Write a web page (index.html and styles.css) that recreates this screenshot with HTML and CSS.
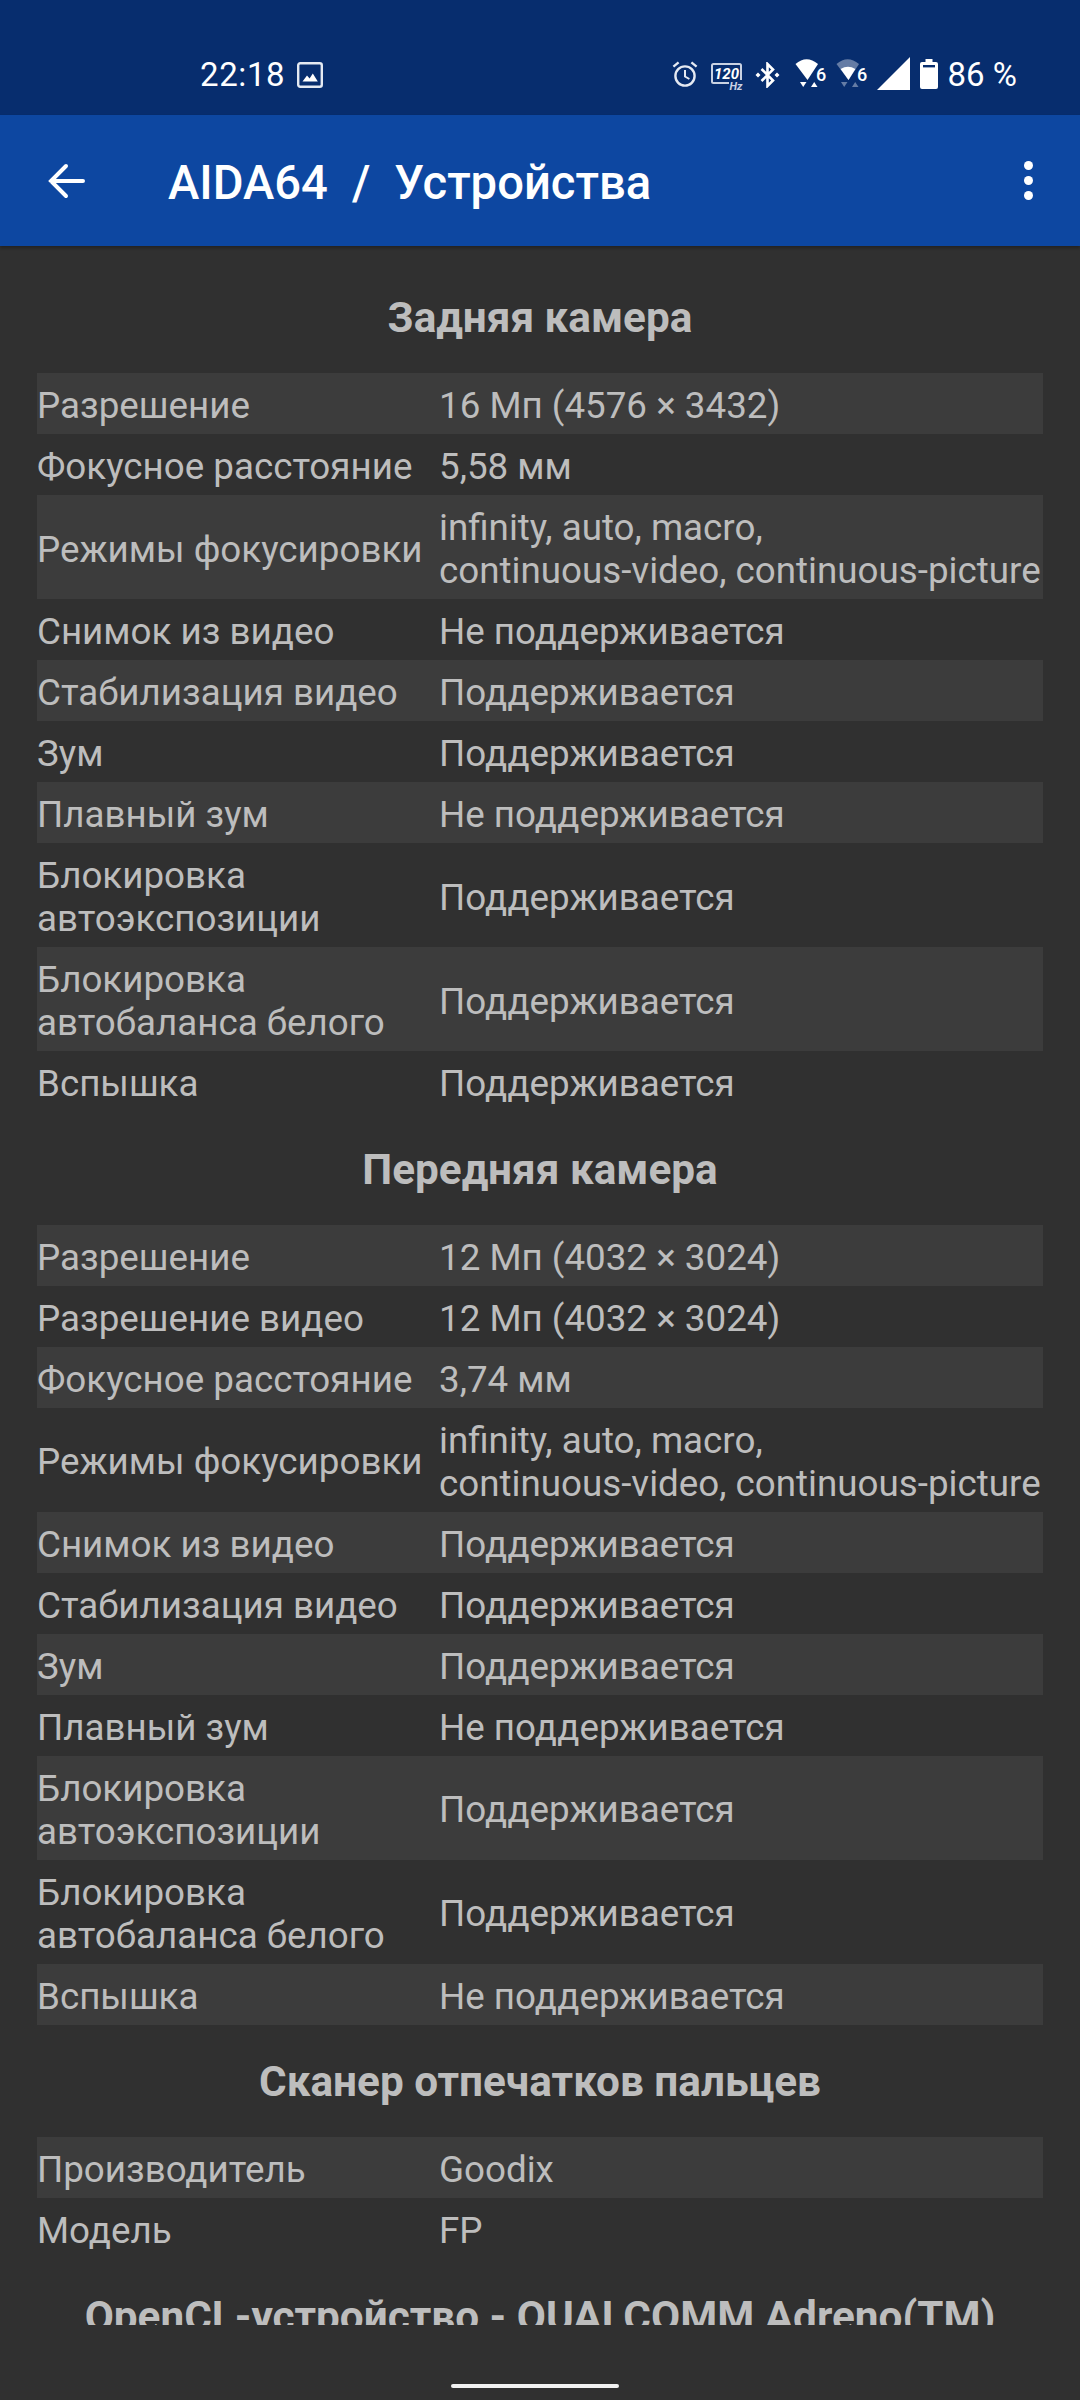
FILE: index.html
```html
<!DOCTYPE html>
<html lang="ru">
<head>
  <meta charset="UTF-8">
  <meta name="viewport" content="width=device-width, initial-scale=1.0">
  <title>AIDA64 / Устройства</title>
  <link rel="stylesheet" href="styles.css">
</head>
<body>
  <!-- Status bar -->
  <div class="status-bar">
    <div class="status-left">
      <span class="clock">22:18</span>
      <svg class="ic-picture" width="26" height="26" viewBox="0 0 26 26">
        <rect x="1.2" y="1.2" width="23.6" height="23.6" rx="2" fill="none" stroke="#e4e9f2" stroke-width="2.4"/>
        <path d="M5.5 19.5 L10 13.5 L12.6 16.4 L15.8 11.5 L20.8 19.5 Z" fill="#fff"/>
      </svg>
    </div>
    <div class="status-right">
      <svg class="ic-alarm" width="26" height="26" viewBox="0 0 26 26">
        <circle cx="13" cy="15" r="9.6" fill="none" stroke="#e4e9f2" stroke-width="2.4"/>
        <path d="M13 9 V15.5 L17.4 18" fill="none" stroke="#e4e9f2" stroke-width="2"/>
        <path d="M1.4 5.6 L6.6 1.4 M24.6 5.6 L19.4 1.4" stroke="#e4e9f2" stroke-width="2.4"/>
      </svg>
      <svg class="ic-hz" width="32" height="30" viewBox="0 0 32 30">
        <path d="M18 20 H2.5 a1.5 1.5 0 0 1 -1.5 -1.5 V2.5 a1.5 1.5 0 0 1 1.5 -1.5 H28.5 a1.5 1.5 0 0 1 1.5 1.5 V17" fill="none" stroke="#c9d2e3" stroke-width="2"/>
        <text class="hz-num" x="15.5" y="16" text-anchor="middle">120</text>
        <text class="hz-unit" x="25" y="26.5" text-anchor="middle">Hz</text>
      </svg>
      <svg class="ic-bt" width="25" height="26" viewBox="0 0 25 26">
        <path d="M6.5 7 L18 18.5 L12.5 24 V2 L18 7.5 L6.5 19" fill="none" stroke="#fff" stroke-width="2.6"/>
        <path d="M0.5 13 L3 10.5 L5.5 13 L3 15.5 Z M19.5 13 L22 10.5 L24.5 13 L22 15.5 Z" fill="#fff"/>
      </svg>
      <svg class="ic-wifi" width="32" height="30" viewBox="0 0 32 30">
        <path d="M0.5 6 Q11.5 -3.5 23 6 L12.5 22 Z" fill="#fff"/>
        <text class="wifi-num" x="26" y="23" text-anchor="middle">6</text>
        <path d="M5 24 H11.5 L8.2 29 Z" fill="#fff"/>
        <path d="M16 29 H22.5 L19.2 24 Z" fill="#fff"/>
      </svg>
      <svg class="ic-wifi second" width="32" height="30" viewBox="0 0 32 30">
        <path d="M0.5 6 Q11.5 -3.5 23 6 L12.5 22 Z" fill="#fff" opacity="0.38"/>
        <path d="M4.6 11 Q12 6.5 19.4 11 L12.5 22 Z" fill="#fff"/>
        <text class="wifi-num" x="26" y="23" text-anchor="middle">6</text>
        <path d="M5 24 H11.5 L8.2 29 Z" fill="#fff" opacity="0.38"/>
        <path d="M16 29 H22.5 L19.2 24 Z" fill="#fff" opacity="0.38"/>
      </svg>
      <svg class="ic-signal" width="33" height="33" viewBox="0 0 33 33">
        <path d="M0 33 L33 0 V33 Z" fill="#fff"/>
      </svg>
      <svg class="ic-battery" width="18" height="30" viewBox="0 0 18 30">
        <path d="M5.5 0 H12.5 V3 H16 a2 2 0 0 1 2 2 V28 a2 2 0 0 1 -2 2 H2 a2 2 0 0 1 -2 -2 V5 a2 2 0 0 1 2 -2 H5.5 Z" fill="#fff"/>
        <rect x="3" y="6" width="12" height="2.4" fill="#072d6e"/>
      </svg>
      <span class="battery-text">86 %</span>
    </div>
  </div>

  <!-- App bar -->
  <div class="app-bar">
    <svg class="back" width="38" height="36" viewBox="0 0 38 36">
      <path d="M36 18 H4 M19 3 L4 18 L19 33" fill="none" stroke="#fff" stroke-width="4" stroke-linecap="round"/>
    </svg>
    <div class="app-title"><span>AIDA64</span><span>/</span><span>Устройства</span></div>
    <div class="menu-dots"><i></i><i></i><i></i></div>
  </div>

  <!-- Device info -->
  <div class="content">
    <section>
      <h2>Задняя камера</h2>
      <div class="row"><div>Разрешение</div><div>16 Мп (4576 × 3432)</div></div>
      <div class="row"><div>Фокусное расстояние</div><div>5,58 мм</div></div>
      <div class="row"><div>Режимы фокусировки</div><div>infinity, auto, macro,<br>continuous-video, continuous-picture</div></div>
      <div class="row"><div>Снимок из видео</div><div>Не поддерживается</div></div>
      <div class="row"><div>Стабилизация видео</div><div>Поддерживается</div></div>
      <div class="row"><div>Зум</div><div>Поддерживается</div></div>
      <div class="row"><div>Плавный зум</div><div>Не поддерживается</div></div>
      <div class="row"><div>Блокировка<br>автоэкспозиции</div><div>Поддерживается</div></div>
      <div class="row"><div>Блокировка<br>автобаланса белого</div><div>Поддерживается</div></div>
      <div class="row"><div>Вспышка</div><div>Поддерживается</div></div>
    </section>

    <section>
      <h2>Передняя камера</h2>
      <div class="row"><div>Разрешение</div><div>12 Мп (4032 × 3024)</div></div>
      <div class="row"><div>Разрешение видео</div><div>12 Мп (4032 × 3024)</div></div>
      <div class="row"><div>Фокусное расстояние</div><div>3,74 мм</div></div>
      <div class="row"><div>Режимы фокусировки</div><div>infinity, auto, macro,<br>continuous-video, continuous-picture</div></div>
      <div class="row"><div>Снимок из видео</div><div>Поддерживается</div></div>
      <div class="row"><div>Стабилизация видео</div><div>Поддерживается</div></div>
      <div class="row"><div>Зум</div><div>Поддерживается</div></div>
      <div class="row"><div>Плавный зум</div><div>Не поддерживается</div></div>
      <div class="row"><div>Блокировка<br>автоэкспозиции</div><div>Поддерживается</div></div>
      <div class="row"><div>Блокировка<br>автобаланса белого</div><div>Поддерживается</div></div>
      <div class="row"><div>Вспышка</div><div>Не поддерживается</div></div>
    </section>

    <section>
      <h2>Сканер отпечатков пальцев</h2>
      <div class="row"><div>Производитель</div><div>Goodix</div></div>
      <div class="row"><div>Модель</div><div>FP</div></div>
    </section>

    <section>
      <h2>OpenCL-устройство - QUALCOMM Adreno(TM)</h2>
    </section>
  </div>

  <!-- Gesture bar -->
  <div class="nav-bar"><div class="nav-handle"></div></div>
</body>
</html>
```

FILE: styles.css
```css
html, body {
  margin: 0;
  height: 2400px;
  overflow: hidden;
}
body {
  display: flex;
  flex-direction: column;
  background-color: #303030;
  font-family: Roboto, "Noto Sans", sans-serif;
}
svg {
  display: block;
  flex: none;
}

.status-bar {
  height: 115px;
  flex: none;
  display: flex;
  justify-content: space-between;
  align-items: center;
  padding: 0 63px 0 200px;
  box-sizing: border-box;
  background-color: #072d6e;
  color: #fff;
  font-size: 33px;
}
.status-left, .status-right {
  display: flex;
  align-items: center;
  margin-top: 34px;
}
.clock {
  margin-right: 12px;
  letter-spacing: 0.6px;
}
.ic-alarm { margin: -1px 13px 0 0; }
.ic-hz { margin: 7px 12px 0 0; }
.ic-bt { margin: 1px 15px 0 0; }
.ic-wifi { margin: -3px 9px 0 0; }
.ic-wifi.second { margin-right: 9px; }
.ic-signal { margin: -2px 10px 0 0; }
.ic-battery { margin: -1px 10px 0 0; }
.hz-num {
  font: italic 700 15px Roboto, sans-serif;
  fill: #fff;
}
.hz-unit {
  font: italic 700 11px Roboto, sans-serif;
  fill: #c9d2e3;
}
.wifi-num {
  font: 500 18px Roboto, sans-serif;
  fill: #fff;
}

.app-bar {
  height: 131px;
  flex: none;
  display: flex;
  align-items: center;
  background-color: #0d47a1;
  color: #fff;
  padding: 0 47px;
  box-shadow: 0 2px 3px rgba(0, 0, 0, 0.3);
  position: relative;
}
.back {
  margin-top: 1px;
}
.app-title {
  flex: 1;
  display: flex;
  gap: 24px;
  margin: 4px 0 0 83px;
  font-size: 47.2px;
  font-weight: 500;
}
.menu-dots {
  display: flex;
  flex-direction: column;
  gap: 6px;
}
.menu-dots i {
  display: block;
  width: 9px;
  height: 9px;
  border-radius: 50%;
  background-color: #fff;
}

.content {
  height: 2079px;
  flex: none;
  overflow: hidden;
  padding: 14.5px 37px 0;
  box-sizing: border-box;
  color: #bdbdbd;
  font-size: 36.75px;
  line-height: 43px;
}
.content h2 {
  margin: 0;
  height: 112.5px;
  padding-top: 2px;
  box-sizing: border-box;
  display: flex;
  align-items: center;
  justify-content: center;
  font-size: 42.3px;
  font-weight: 700;
  white-space: nowrap;
}
.row {
  display: grid;
  grid-template-columns: 402px 1fr;
  align-items: center;
  padding: 11px 0 7px;
}
.row:nth-child(even) {
  background-color: #3c3c3c;
}

.nav-bar {
  flex: 1;
  display: flex;
  justify-content: center;
  align-items: flex-end;
  padding-bottom: 12px;
}
.nav-handle {
  width: 168px;
  height: 4px;
  margin-right: 11px;
  border-radius: 2px;
  background-color: #f2f2f2;
}
```
